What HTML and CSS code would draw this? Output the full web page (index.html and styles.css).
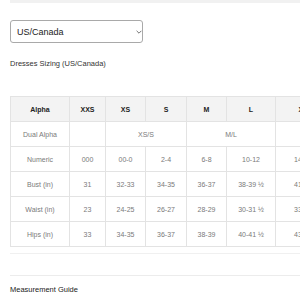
FILE: index.html
```html
<!DOCTYPE html>
<html lang="en">
<head>
<meta charset="utf-8">
<title>Size Guide</title>
<link rel="stylesheet" href="styles.css">
</head>
<body>
<div class="top-strip"></div>
<main class="page">
  <div class="select-wrap">
    <select class="region"><option>US/Canada</option></select>
    <svg class="chev" width="6" height="4" viewBox="0 0 6 4"><path d="M0.6 0.8 L3 3.2 L5.4 0.8" fill="none" stroke="#666" stroke-width="0.9"/></svg>
  </div>
  <p class="title">Dresses Sizing (US/Canada)</p>
  <div class="table-wrap">
    <table class="sizes">
      <colgroup>
        <col class="c-alpha"><col class="c-xxs"><col class="c-xs"><col class="c-s"><col class="c-m"><col class="c-l"><col class="c-xl"><col class="c-xxl">
      </colgroup>
      <thead>
        <tr><th>Alpha</th><th>XXS</th><th>XS</th><th>S</th><th>M</th><th>L</th><th>XL</th><th>XXL</th></tr>
      </thead>
      <tbody>
        <tr><td>Dual Alpha</td><td></td><td colspan="2">XS/S</td><td colspan="2">M/L</td><td colspan="2">XL/XXL</td></tr>
        <tr><td>Numeric</td><td>000</td><td>00-0</td><td>2-4</td><td>6-8</td><td>10-12</td><td>14-16</td><td>18-20</td></tr>
        <tr><td>Bust (in)</td><td>31</td><td>32-33</td><td>34-35</td><td>36-37</td><td>38-39 ½</td><td>41-43</td><td>44-46</td></tr>
        <tr><td>Waist (in)</td><td>23</td><td>24-25</td><td>26-27</td><td>28-29</td><td>30-31 ½</td><td>33-35</td><td>36-38</td></tr>
        <tr><td>Hips (in)</td><td>33</td><td>34-35</td><td>36-37</td><td>38-39</td><td>40-41 ½</td><td>43-45</td><td>46-48</td></tr>
      </tbody>
    </table>
  </div>
  <hr class="sep">
  <h3 class="guide">Measurement Guide</h3>
</main>
</body>
</html>
```
FILE: styles.css
```css
html, body {
  margin: 0;
  padding: 0;
  background: #fff;
  overflow: hidden;
}
body {
  font-family: "Liberation Sans", Arial, sans-serif;
  color: #333;
}
.top-strip {
  height: 3px;
  margin-left: 10px;
  background: #f1f1f1;
}
.page {
  padding: 17px 0 0 10px;
}
.select-wrap {
  position: relative;
  width: 133px;
  height: 23px;
}
.region {
  appearance: none;
  -webkit-appearance: none;
  box-sizing: border-box;
  width: 133px;
  height: 23px;
  margin: 0;
  padding: 0 0 0 6px;
  border: 1px solid #a9a9a9;
  border-radius: 3px;
  background: #fff;
  font-family: "Liberation Sans", Arial, sans-serif;
  font-size: 9px;
  color: #222;
}
.chev {
  position: absolute;
  left: 126px;
  top: 10px;
}
.title {
  margin: 16px 0 0;
  font-size: 7.5px;
  line-height: 9px;
  color: #333;
}
.table-wrap {
  margin-top: 28px;
  overflow: hidden;
  padding-bottom: 6px;
  border-bottom: 1px solid #f0f0f0;
}
.sizes {
  border-collapse: collapse;
  table-layout: fixed;
  width: 375px;
}
.c-alpha { width: 59px; }
.c-xxs { width: 36px; }
.c-xs { width: 40px; }
.c-s { width: 41px; }
.c-m { width: 40px; }
.c-l { width: 49px; }
.c-xl { width: 55px; }
.c-xxl { width: 55px; }
.sizes th, .sizes td {
  border: 1px solid #e3e3e3;
  height: 24px;
  padding: 0;
  text-align: center;
  font-size: 7px;
  white-space: nowrap;
}
.sizes th {
  background: #f3f3f3;
  font-weight: bold;
  color: #222;
}
.sizes td {
  color: #7a7a7a;
}
.sep {
  margin: 21px 0 0;
  border: 0;
  border-top: 1px solid #ececec;
}
.guide {
  margin: 9px 0 0;
  font-size: 7.5px;
  line-height: 9px;
  font-weight: normal;
  color: #222;
}
```
